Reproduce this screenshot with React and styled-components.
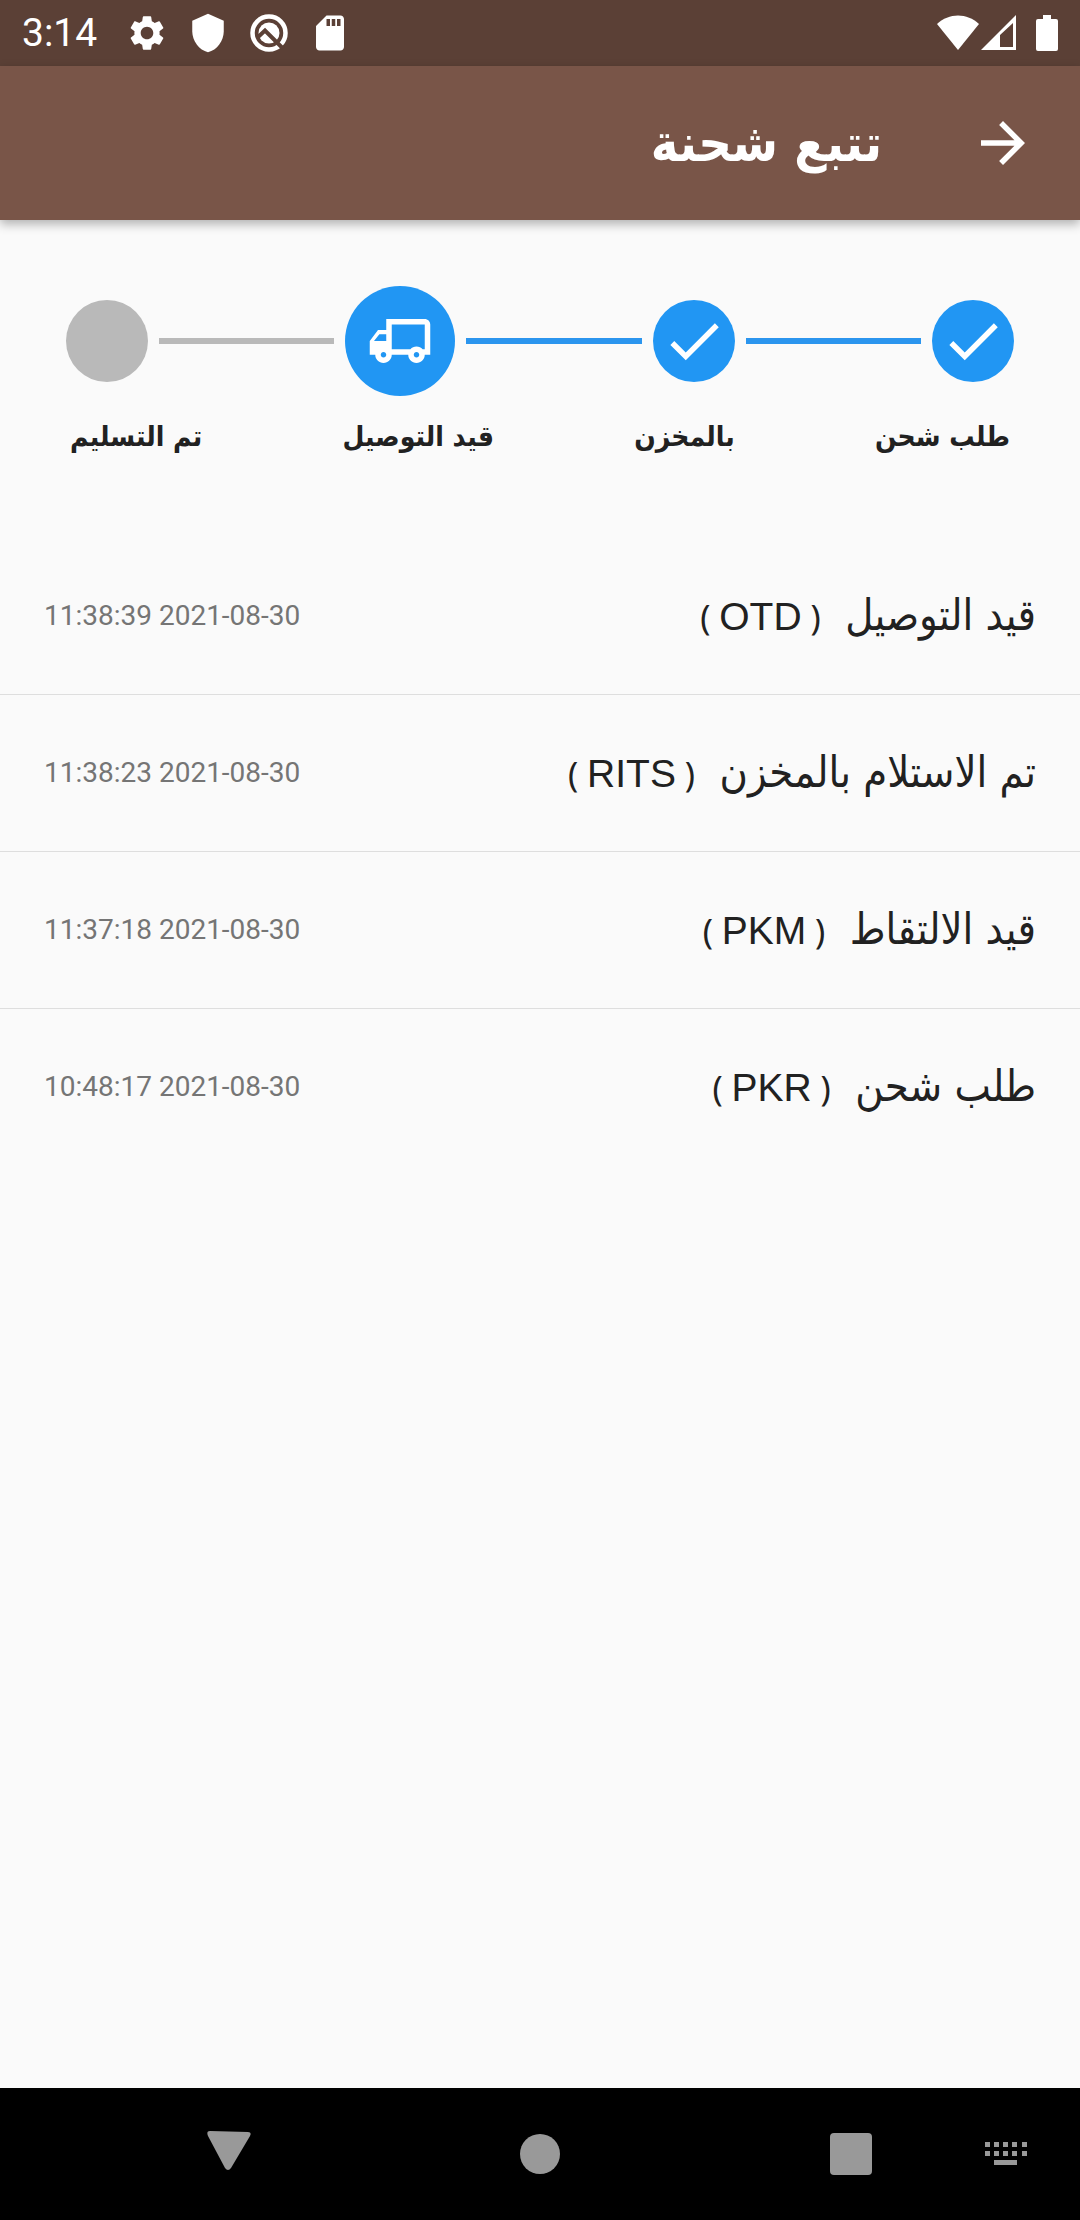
import React from "react";
import styled, { createGlobalStyle } from "styled-components";
import {
  MdArrowForward,
  MdCheck,
  MdOutlineLocalShipping,
  MdSdCard,
  MdSettings,
  MdShield,
} from "react-icons/md";

const GlobalStyle = createGlobalStyle`
  * {
    box-sizing: border-box;
  }

  body {
    margin: 0;
    background-color: #fafafa;
    color: #212121;
    font-family: "DejaVu Sans Condensed", "DejaVu Sans", sans-serif;
  }
`;

const Page = styled.div`
  display: flex;
  flex-direction: column;
  min-height: 100vh;
`;

const StatusBar = styled.div`
  display: flex;
  align-items: center;
  justify-content: space-between;
  height: 66px;
  padding: 0 22px;
  background-color: #5b4036;
  color: #fff;
`;

const StatusGroup = styled.div`
  display: flex;
  align-items: center;
  gap: ${(props) => props.$gap}px;
`;

const Clock = styled.time`
  margin-right: 10px;
  font-family: Roboto, sans-serif;
  font-size: 39px;
  line-height: 48px;
`;

const AppBar = styled.header`
  display: flex;
  align-items: center;
  height: 154px;
  background-color: #795548;
  color: #fff;
  box-shadow: 0 4px 10px rgba(0, 0, 0, 0.3);
`;

const BackButton = styled.button`
  display: flex;
  align-items: center;
  justify-content: center;
  width: 154px;
  height: 154px;
  padding: 0;
  border: none;
  background: none;
  color: inherit;
`;

const Title = styled.h1`
  margin: 0 44px;
  font-size: 52px;
  line-height: 64px;
  font-weight: bold;
`;

const Main = styled.main`
  flex: 1;
`;

const Steps = styled.div`
  display: flex;
  align-items: center;
  gap: 11px;
  height: 110px;
  margin: 66px 66px 0;
`;

const StepCircle = styled.div`
  display: flex;
  flex-shrink: 0;
  align-items: center;
  justify-content: center;
  width: ${(props) => (props.$active ? 110 : 82)}px;
  height: ${(props) => (props.$active ? 110 : 82)}px;
  border-radius: 50%;
  background-color: ${(props) => (props.$reached ? "#2196f3" : "#b9b9b9")};
  color: #fff;
`;

const StepLine = styled.div`
  flex: 1;
  height: 6px;
  background-color: ${(props) => (props.$reached ? "#2b95ee" : "#b9b9b9")};
`;

const TruckIcon = styled(MdOutlineLocalShipping)`
  transform: scaleX(-1);
`;

const StepLabels = styled.div`
  display: flex;
  justify-content: space-between;
  margin: 18px 70px 77px;
  font-size: 28px;
  line-height: 46px;
  font-weight: bold;
`;

const EventList = styled.ul`
  margin: 0;
  padding: 0;
  list-style: none;
`;

const EventRow = styled.li`
  display: flex;
  align-items: center;
  justify-content: space-between;
  height: 157px;
  padding: 0 44px;

  & + & {
    border-top: 1px solid #dedede;
  }
`;

const EventName = styled.span`
  font-size: 43px;
  line-height: 56px;
  white-space: pre;
`;

const EventBrackets = styled.span`
  font-family: "Noto Sans", sans-serif;
  font-size: 34px;
`;

const EventCode = styled.span`
  font-family: "Liberation Sans", sans-serif;
  font-size: 39px;
`;

const EventTime = styled.time`
  color: #757575;
  font-family: Roboto, sans-serif;
  font-size: 28px;
  line-height: 48px;
`;

const NavBar = styled.nav`
  display: flex;
  height: 132px;
  padding-left: 148px;
  background-color: #000;
  color: #999;
`;

const NavMain = styled.div`
  display: flex;
  flex: 1;
  justify-content: space-between;
`;

const NavButton = styled.button`
  display: flex;
  align-items: center;
  justify-content: center;
  width: ${(props) => (props.$narrow ? 148 : 162)}px;
  height: 132px;
  padding: 0;
  border: none;
  background: none;
  color: inherit;
`;

const steps = [
  { label: "طلب شحن", status: "done" },
  { label: "بالمخزن", status: "done" },
  { label: "قيد التوصيل", status: "active" },
  { label: "تم التسليم", status: "pending" },
];

const events = [
  { name: "قيد التوصيل", code: "OTD", time: "11:38:39 2021-08-30" },
  { name: "تم الاستلام بالمخزن", code: "RITS", time: "11:38:23 2021-08-30" },
  { name: "قيد الالتقاط", code: "PKM", time: "11:37:18 2021-08-30" },
  { name: "طلب شحن", code: "PKR", time: "10:48:17 2021-08-30" },
];

const QIcon = () => (
  <svg width="42" height="42" viewBox="0 0 42 42" fill="none">
    <circle cx="21" cy="21" r="16.5" stroke="currentColor" strokeWidth="4.5" />
    <circle cx="21" cy="21" r="10.5" fill="currentColor" />
    <path d="M9 26L17 18.500L35 36.500" stroke="#5b4036" strokeWidth="4" />
  </svg>
);

const WifiIcon = () => (
  <svg width="42" height="36" viewBox="0 0 42 36" fill="currentColor">
    <path d="M0 9C12-2.500 30-2.500 42 9L21 35Z" />
  </svg>
);

const SignalIcon = () => (
  <svg width="36" height="36" viewBox="0 0 36 36" fill="currentColor">
    <path fillRule="evenodd" d="M0 35L35 0V35ZM19 20V32H32V8Z" />
  </svg>
);

const BatteryIcon = () => (
  <svg width="22" height="36" viewBox="0 0 22 36" fill="currentColor">
    <path d="M7 0H15V4H20Q22 4 22 6V34Q22 36 20 36H2Q0 36 0 34V6Q0 4 2 4H7Z" />
  </svg>
);

const KeyboardIcon = () => (
  <svg width="42" height="24" viewBox="0 0 42 24" fill="currentColor">
    {[0, 9, 18, 27, 37].map((x) => (
      <path key={x} d={`M${x} 0h5v5h-5zM${x} 9h5v5h-5z`} />
    ))}
    <path d="M9 18h23v5H9z" />
  </svg>
);

const App = () => {
  return (
    <Page dir="rtl" lang="ar">
      <GlobalStyle />
      <StatusBar dir="ltr">
        <StatusGroup $gap={19}>
          <Clock>3:14</Clock>
          <MdSettings size={42} />
          <MdShield size={42} />
          <QIcon />
          <MdSdCard size={42} />
        </StatusGroup>
        <StatusGroup $gap={19}>
          <StatusGroup $gap={2}>
            <WifiIcon />
            <SignalIcon />
          </StatusGroup>
          <BatteryIcon />
        </StatusGroup>
      </StatusBar>
      <AppBar>
        <BackButton aria-label="رجوع">
          <MdArrowForward size={66} />
        </BackButton>
        <Title>تتبع شحنة</Title>
      </AppBar>
      <Main>
        <Steps>
          {steps.map((step, i) => (
            <React.Fragment key={step.label}>
              {i > 0 && <StepLine $reached={step.status !== "pending"} />}
              <StepCircle $active={step.status === "active"} $reached={step.status !== "pending"}>
                {step.status === "done" && <MdCheck size={66} />}
                {step.status === "active" && <TruckIcon size={66} />}
              </StepCircle>
            </React.Fragment>
          ))}
        </Steps>
        <StepLabels>
          {steps.map((step) => (
            <span key={step.label}>{step.label}</span>
          ))}
        </StepLabels>
        <EventList>
          {events.map((event) => (
            <EventRow key={event.code}>
              <EventName>
                {event.name}
                {"  "}
                <EventBrackets>
                  {"( "}
                  <EventCode>{event.code}</EventCode>
                  {" )"}
                </EventBrackets>
              </EventName>
              <EventTime dir="ltr">{event.time}</EventTime>
            </EventRow>
          ))}
        </EventList>
      </Main>
      <NavBar dir="ltr">
        <NavMain>
          <NavButton aria-label="رجوع">
            <svg width="44" height="48" viewBox="0 0 44 48" fill="currentColor">
              <path d="M3 1L41 2Q45 2 43 6L24 38Q21 42 18 38L1 6Q-1 1 3 1Z" />
            </svg>
          </NavButton>
          <NavButton aria-label="الرئيسية">
            <svg width="40" height="40" viewBox="0 0 40 40" fill="currentColor">
              <circle cx="20" cy="20" r="20" />
            </svg>
          </NavButton>
          <NavButton aria-label="التطبيقات">
            <svg width="42" height="42" viewBox="0 0 42 42" fill="currentColor">
              <rect width="42" height="42" rx="4" />
            </svg>
          </NavButton>
        </NavMain>
        <NavButton $narrow aria-label="لوحة المفاتيح">
          <KeyboardIcon />
        </NavButton>
      </NavBar>
    </Page>
  );
};

export default App;
